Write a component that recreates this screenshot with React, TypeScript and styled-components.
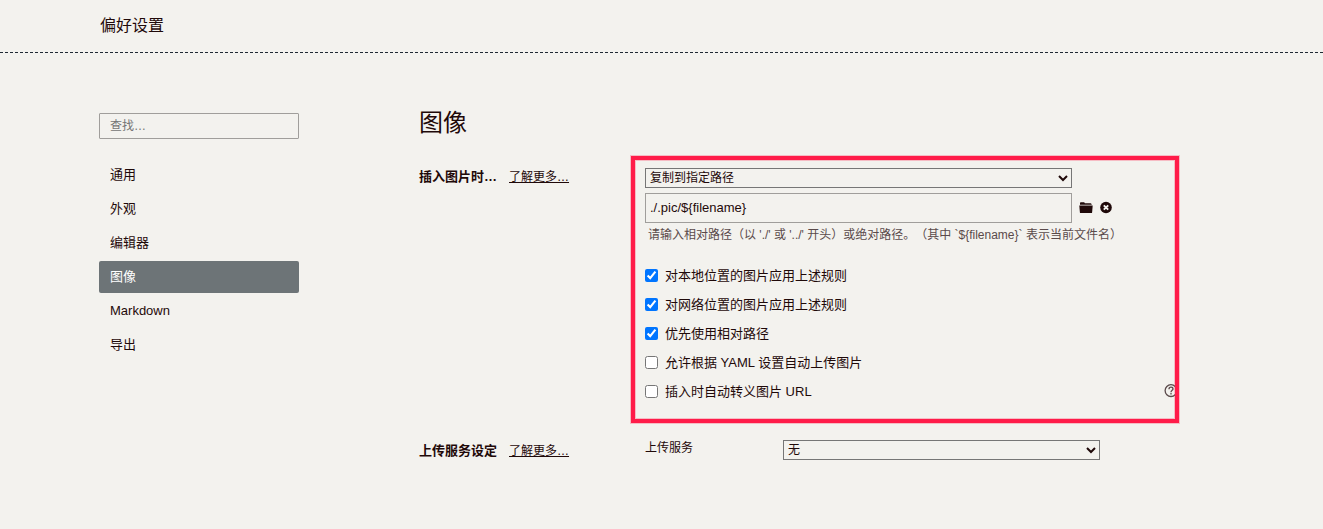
import React from "react";
import styled, { createGlobalStyle } from "styled-components";

const ink = "#1f0909";
const paper = "#f3f2ee";

const GlobalStyle = createGlobalStyle`
  *, *::before, *::after { box-sizing: border-box; }
  body {
    margin: 0;
    background: ${paper};
    color: ${ink};
    font: 13px/20px "Liberation Sans", "Noto Sans CJK SC", sans-serif;
    text-spacing-trim: space-all;
  }
  button, input, select { font: inherit; color: inherit; }
`;

const Header = styled.header`
  height: 53px;
  padding: 14px 100px 0;
  border-bottom: 1px dashed #1f2933;
`;

const AppTitle = styled.h1`
  margin: 0;
  font-size: 16px;
  line-height: 24px;
  font-weight: 400;
`;

const Body = styled.div`
  display: flex;
  align-items: flex-start;
  gap: 120px;
  padding: 52px 145px 48px 99px;
`;

const Sidebar = styled.aside`
  flex: 0 0 200px;
  padding-top: 8px;
`;

const SearchInput = styled.input`
  display: block;
  width: 100%;
  height: 26px;
  padding: 0 10px;
  border: 1px solid #a09e9b;
  border-radius: 1px;
  background: transparent;
  font-size: 12px;
  &::placeholder { color: #757575; opacity: 1; }
`;

const NavList = styled.nav`
  display: flex;
  flex-direction: column;
  gap: 2px;
  margin-top: 20px;
`;

const NavLink = styled.a<{ $active?: boolean }>`
  height: 32px;
  padding: 0 11px;
  line-height: 32px;
  border-radius: 2px;
  text-decoration: none;
  color: ${(p) => (p.$active ? "#ffffff" : ink)};
  background: ${(p) => (p.$active ? "#6d7477" : "transparent")};
`;

const Main = styled.main`
  flex: 1;
  min-width: 0;
`;

const PageTitle = styled.h2`
  margin: 0 0 27px;
  font-size: 24px;
  line-height: 36px;
  font-weight: 400;
`;

const Section = styled.section<{ $centered?: boolean }>`
  display: grid;
  grid-template-columns: 226px minmax(0, 1fr);
  align-items: ${(p) => (p.$centered ? "end" : "start")};
`;

const SectionLabel = styled.div`
  display: flex;
  gap: 12px;
  line-height: 18px;
`;

const SectionTitle = styled.h3`
  margin: 0;
  font-size: 13px;
  line-height: 18px;
  font-weight: 700;
`;

const MoreLink = styled.a`
  font-size: 12px;
  color: ${ink};
`;

const HighlightedGroup = styled.div`
  position: relative;
  padding-bottom: 34px;
  &::after {
    content: "";
    position: absolute;
    inset: -12px -1px 17px -14px;
    border: 4px solid #ff1c49;
    box-shadow: 0 0 0 1px #ff1c4940, inset 0 0 0 1px #ff1c4940;
    pointer-events: none;
  }
`;

const Select = styled.select`
  display: block;
  width: 100%;
  height: 20px;
  padding: 0;
  border: 1px solid #767676;
  border-radius: 0;
  background: transparent;
  font-size: 12px;
`;

const FieldRow = styled.div`
  display: grid;
  grid-template-columns: minmax(0, 1fr) 99px;
  gap: 7px;
  align-items: center;
`;

const PathInput = styled.input`
  width: 100%;
  height: 30px;
  padding: 0 4px 2px;
  border: 1px solid #a09e9b;
  background: transparent;
`;

const PathRow = styled(FieldRow)`
  margin-top: 5px;
`;

const Actions = styled.div`
  display: flex;
  gap: 6px;
`;

const IconButton = styled.button`
  display: flex;
  padding: 0;
  border: 0;
  background: transparent;
  cursor: pointer;
`;

const Hint = styled.p`
  margin: 2px 0 16px 3px;
  font-size: 12px;
  line-height: 20px;
  color: #5a4a4a;
`;

const OptionRow = styled.div`
  display: flex;
  align-items: center;
  justify-content: space-between;
  height: 29px;
`;

const OptionLabel = styled.label`
  display: flex;
  align-items: center;
  gap: 7px;
`;

const Checkbox = styled.input`
  width: 13px;
  height: 13px;
  margin: 0;
`;

const UploadRow = styled.div`
  display: grid;
  grid-template-columns: 138px minmax(0, 1fr);
  padding-right: 78px;
`;

const UploadLabel = styled.label`
  font-size: 12px;
  line-height: 16px;
`;

const FolderIcon = () => (
  <svg width="14" height="14" viewBox="0 0 14 14" fill={ink} aria-hidden="true">
    <path d="M1 3.8V2.2Q1 1.3 1.8 1.3H4.8Q5.6 1.3 5.9 2.2H11.6Q12.6 2.2 12.8 3.8Z" />
    <path d="M0.3 4.5H13.7L13.1 11.4Q13 12 12.4 12H1.6Q1 12 0.9 11.4Z" />
  </svg>
);

const RemoveIcon = () => (
  <svg width="14" height="14" viewBox="0 0 14 14" aria-hidden="true">
    <circle cx="7" cy="6.5" r="5.8" fill={ink} />
    <path d="M4.8 4.3L9.2 8.7M9.2 4.3L4.8 8.7" stroke={paper} strokeWidth="1.9" />
  </svg>
);

const HelpIcon = () => (
  <svg width="14" height="16" viewBox="0 0 14 16" fill="none" stroke="#5a4a4a" strokeWidth="1.3" aria-hidden="true">
    <circle cx="7" cy="6.6" r="5.9" />
    <path d="M5 5.2C5 3.9 5.8 3.2 7 3.2S9 4 9 5C9 6.3 7 6.5 7 8.2" />
    <path d="M7 9.1V10.4" />
  </svg>
);

const navItems = ["通用", "外观", "编辑器", "图像", "Markdown", "导出"];

const options = [
  { text: "对本地位置的图片应用上述规则", checked: true },
  { text: "对网络位置的图片应用上述规则", checked: true },
  { text: "优先使用相对路径", checked: true },
  { text: "允许根据 YAML 设置自动上传图片", checked: false },
  { text: "插入时自动转义图片 URL", checked: false, help: true },
];

export default function App() {
  return (
    <div lang="zh-CN">
      <GlobalStyle />
      <Header>
        <AppTitle>偏好设置</AppTitle>
      </Header>
      <Body>
        <Sidebar>
          <SearchInput type="search" placeholder="查找…" aria-label="查找" />
          <NavList>
            {navItems.map((item) => (
              <NavLink
                key={item}
                href="#"
                $active={item === "图像"}
                aria-current={item === "图像" ? "page" : undefined}
              >
                {item}
              </NavLink>
            ))}
          </NavList>
        </Sidebar>
        <Main>
          <PageTitle>图像</PageTitle>
          <Section>
            <SectionLabel>
              <SectionTitle>插入图片时…</SectionTitle>
              <MoreLink href="#">了解更多…</MoreLink>
            </SectionLabel>
            <HighlightedGroup>
              <FieldRow>
                <Select aria-label="插入图片时">
                  <option>复制到指定路径</option>
                </Select>
              </FieldRow>
              <PathRow>
                <PathInput type="text" defaultValue="./.pic/${filename}" aria-label="路径" />
                <Actions>
                  <IconButton type="button" aria-label="选择文件夹">
                    <FolderIcon />
                  </IconButton>
                  <IconButton type="button" aria-label="清除">
                    <RemoveIcon />
                  </IconButton>
                </Actions>
              </PathRow>
              <Hint>{"请输入相对路径（以 './' 或 '../' 开头）或绝对路径。（其中 `${filename}` 表示当前文件名）"}</Hint>
              {options.map((option) => (
                <OptionRow key={option.text}>
                  <OptionLabel>
                    <Checkbox type="checkbox" defaultChecked={option.checked} />
                    {option.text}
                  </OptionLabel>
                  {option.help && (
                    <IconButton type="button" aria-label="帮助">
                      <HelpIcon />
                    </IconButton>
                  )}
                </OptionRow>
              ))}
            </HighlightedGroup>
          </Section>
          <Section $centered>
            <SectionLabel>
              <SectionTitle>上传服务设定</SectionTitle>
              <MoreLink href="#">了解更多…</MoreLink>
            </SectionLabel>
            <UploadRow>
              <UploadLabel htmlFor="upload-service">上传服务</UploadLabel>
              <Select id="upload-service">
                <option>无</option>
              </Select>
            </UploadRow>
          </Section>
        </Main>
      </Body>
    </div>
  );
}
